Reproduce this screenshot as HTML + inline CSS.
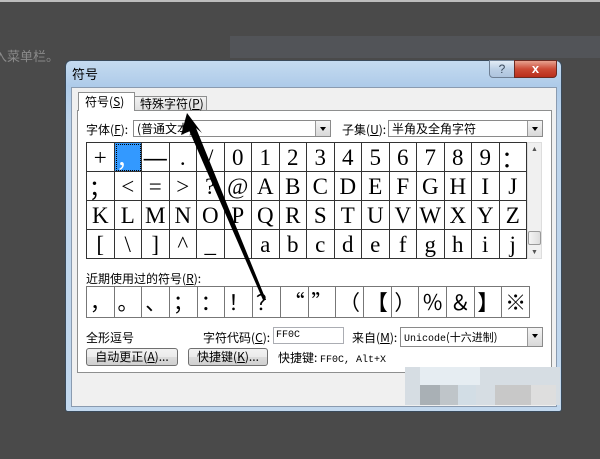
<!DOCTYPE html>
<html><head><meta charset="utf-8"><style>
*{margin:0;padding:0;box-sizing:border-box}
body{width:600px;height:459px;background:#4a4a4a;position:relative;overflow:hidden;font-family:"Liberation Sans","Noto Sans CJK SC",sans-serif;font-size:12px;color:#000}
.a{position:absolute}
.cjk{font-family:"Noto Sans CJK SC",sans-serif}
.grid{display:grid;grid-template-columns:repeat(16,27.5px);grid-auto-rows:29px;border-top:1px solid #333;border-left:1px solid #333;background:#fff}
.grid div{border-right:1px solid #333;border-bottom:1px solid #333;font-family:"Liberation Serif","Noto Serif CJK SC",serif;font-size:23px;display:flex;align-items:center;justify-content:center;line-height:1}
.rec{display:grid;grid-template-columns:repeat(16,27.7px);grid-auto-rows:31px;border-top:1px solid #777;border-left:1px solid #777;background:#fff}
.rec div{border-right:1px solid #777;border-bottom:1px solid #777;font-family:"Noto Sans CJK SC",sans-serif;font-size:21px;display:flex;align-items:center;justify-content:center;line-height:1}
.combo{background:#fff;border:1px solid #8a8a8a;height:17px;font-size:12px;line-height:15px;padding-left:3px}
.dd{position:absolute;right:0;top:0;width:15px;height:15px;background:linear-gradient(#f4f4f4,#d8d8d8);border-left:1px solid #999}
.dd:after{content:"";position:absolute;left:4px;top:6px;border:3.5px solid transparent;border-top:4px solid #000}
.btn{border:1px solid #707070;border-radius:3px;background:linear-gradient(#f2f2f2,#ebebeb 50%,#dcdcdc 51%,#cfcfcf);font-size:12px;text-align:center;line-height:16px}
</style></head><body>
<div class="a" style="left:0;top:0;width:600px;height:2px;background:#bdbdbd"></div>
<div class="a" style="left:230px;top:36px;width:370px;height:22px;background:#525458"></div>
<div class="a cjk" style="left:-6px;top:46px;color:#8a8a8a;font-size:13px">入菜单栏。</div>

<div class="a" style="left:65px;top:60px;width:497px;height:352px;border-radius:6px 6px 3px 3px;border:1px solid #3a4a5a;background:linear-gradient(180deg,#c5dbf0 0px,#aecbe9 25px,#bcd3ea 60px,#c2d8ee 100%)"></div>
<div class="a cjk" style="left:72px;top:64px;font-size:13px;color:#000">符号</div>
<div class="a" style="left:489px;top:60px;width:26px;height:18px;border:1px solid #6e7f94;border-radius:0 0 0 4px;background:linear-gradient(#e3ecf6,#bdd0e6 50%,#aec4de);text-align:center;font-size:12px;color:#3b4a5c;line-height:16px">?</div>
<div class="a" style="left:514px;top:60px;width:43px;height:18px;border:1px solid #6b2a22;border-radius:0 0 4px 0;background:linear-gradient(#e7a290,#cc4b36 50%,#b92e1b);text-align:center;color:#fff;font-weight:bold;font-size:13px;line-height:16px">x</div>
<div class="a" style="left:71px;top:87px;width:486px;height:320px;background:#f0f0f0;border:1px solid #8a9bb0"></div>
<div class="a" style="left:77px;top:110px;width:475px;height:263px;background:#fff;border:1px solid #8e8f8f"></div>
<div class="a cjk" style="left:78px;top:92px;width:57px;height:19px;background:#fff;border:1px solid #8e8f8f;border-bottom:none;padding-left:6px;line-height:17px">符号(<u>S</u>)</div>
<div class="a cjk" style="left:134px;top:96px;width:73px;height:14px;background:linear-gradient(#f2f2f2,#e0e0e0);border:1px solid #8e8f8f;border-bottom:none;padding-left:5px;line-height:13px">特殊字符(<u>P</u>)</div>

<div class="a cjk" style="left:86px;top:121px">字体(<u>F</u>):</div>
<div class="a combo cjk" style="left:133px;top:120px;width:198px">(普通文本)<div class="dd"></div></div>
<div class="a cjk" style="left:342px;top:121px">子集(<u>U</u>):</div>
<div class="a combo cjk" style="left:388px;top:120px;width:155px">半角及全角字符<div class="dd"></div></div>

<div class="a grid" style="left:86px;top:142px">
<div>+</div><div style="background:#3399ff;color:#fff;outline:1px dotted #000;outline-offset:-2px;font-family:'Noto Sans CJK SC'">，</div><div style="font-weight:bold">—</div><div>.</div><div>/</div><div>0</div><div>1</div><div>2</div><div>3</div><div>4</div><div>5</div><div>6</div><div>7</div><div>8</div><div>9</div><div style="font-family:'Noto Sans CJK SC'">：</div>
<div style="font-family:'Noto Sans CJK SC'">；</div><div>&lt;</div><div>=</div><div>&gt;</div><div>?</div><div>@</div><div>A</div><div>B</div><div>C</div><div>D</div><div>E</div><div>F</div><div>G</div><div>H</div><div>I</div><div>J</div>
<div>K</div><div>L</div><div>M</div><div>N</div><div>O</div><div>P</div><div>Q</div><div>R</div><div>S</div><div>T</div><div>U</div><div>V</div><div>W</div><div>X</div><div>Y</div><div>Z</div>
<div>[</div><div>\</div><div>]</div><div>^</div><div>_</div><div>`</div><div>a</div><div>b</div><div>c</div><div>d</div><div>e</div><div>f</div><div>g</div><div>h</div><div>i</div><div>j</div>
</div>
<div class="a" style="left:527px;top:142px;width:15px;height:117px;background:#f0f0f0;border:1px solid #ddd"></div>
<div class="a" style="left:531px;top:146px;font-size:7px;color:#555">▲</div>
<div class="a" style="left:531px;top:249px;font-size:7px;color:#555">▼</div>
<div class="a" style="left:528px;top:231px;width:13px;height:14px;background:linear-gradient(90deg,#f4f4f4,#dcdcdc);border:1px solid #999;border-radius:2px"></div>

<div class="a cjk" style="left:86px;top:270px">近期使用过的符号(<u>R</u>):</div>
<div class="a rec" style="left:86px;top:286px">
<div>，</div><div>。</div><div>、</div><div>；</div><div>：</div><div>！</div><div>？</div><div>“</div><div>”</div><div>（</div><div style="font-weight:bold">【</div><div>）</div><div>％</div><div>＆</div><div style="font-weight:bold">】</div><div>※</div>
</div>

<div class="a cjk" style="left:86px;top:329px">全形逗号</div>
<div class="a cjk" style="left:203px;top:329px">字符代码(<u>C</u>):</div>
<div class="a" style="left:273px;top:327px;width:71px;height:17px;background:#fff;border:1px solid #abadb3;font-family:'Liberation Mono';font-size:10px;line-height:15px;padding-left:2px">FF0C</div>
<div class="a cjk" style="left:352px;top:329px">来自(<u>M</u>):</div>
<div class="a combo" style="left:400px;top:327px;width:143px;height:20px;line-height:18px;font-size:11px"><span style="font-family:'Liberation Mono';font-size:10px">Unicode</span><span class="cjk">(十六进制)</span><div class="dd" style="height:18px"></div></div>

<div class="a btn cjk" style="left:86px;top:348px;width:92px;height:18px">自动更正(<u>A</u>)...</div>
<div class="a btn cjk" style="left:188px;top:348px;width:80px;height:18px">快捷键(<u>K</u>)...</div>
<div class="a cjk" style="left:278px;top:349px">快捷键: <span style="font-family:'Liberation Mono';font-size:10px">FF0C, Alt+X</span></div>

<div class="a" style="left:405px;top:367px;width:155px;height:38px;background:#d6dde3"></div>
<div class="a" style="left:420px;top:385px;width:20px;height:20px;background:#a9b0b5"></div>
<div class="a" style="left:440px;top:385px;width:18px;height:20px;background:#bfc5c9"></div>
<div class="a" style="left:458px;top:385px;width:18px;height:20px;background:#d2dde5"></div>
<div class="a" style="left:495px;top:385px;width:36px;height:20px;background:#c8c8c8"></div>
<div class="a" style="left:531px;top:385px;width:25px;height:20px;background:#dedede"></div>
<div class="a" style="left:420px;top:367px;width:60px;height:18px;background:#e6edf2"></div>

<svg class="a" style="left:0;top:0" width="600" height="459">
<polygon points="187,113 181,135 190,131 264,300 266,300 196,128 202,133" fill="#000"/>
<polygon points="188,128 194,128 266,300 263,300" fill="#000"/>
</svg>
</body></html>
